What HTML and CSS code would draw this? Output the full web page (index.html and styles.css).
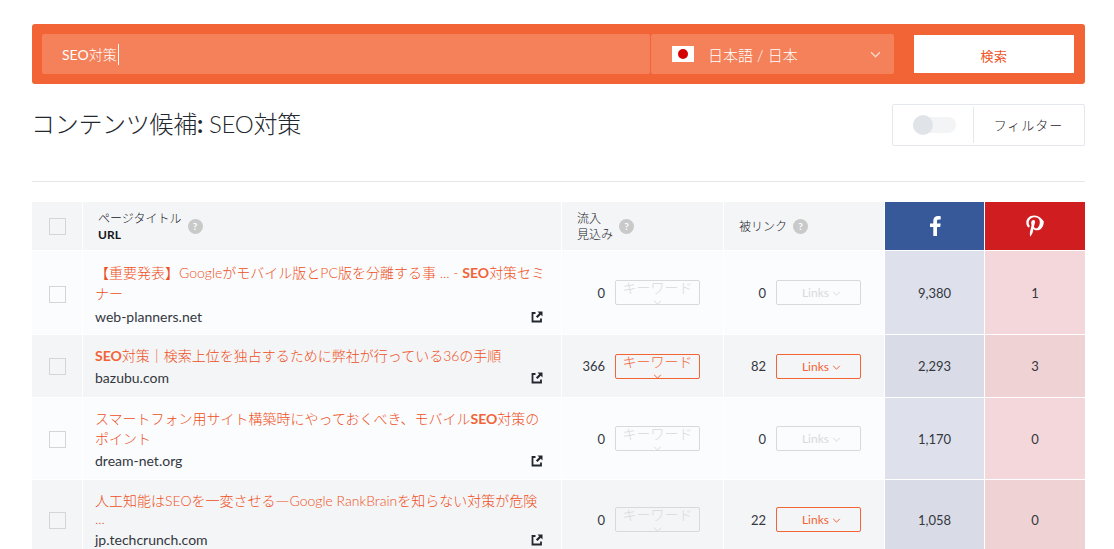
FILE: index.html
```html
<!DOCTYPE html>
<html lang="ja">
<head>
<meta charset="utf-8">
<title>コンテンツ候補</title>
<link rel="stylesheet" href="styles.css">
</head>
<body>
<svg class="defs" width="0" height="0" aria-hidden="true">
  <symbol id="ext" viewBox="0 0 12 12"><path d="M4.500 2H1.500v8.500H10V7.500" fill="none" stroke="currentColor" stroke-width="1.800"/><path d="M6.500 .5H11.500V5.500L9.800 3.800 6.500 7.100 4.900 5.500 8.200 2.200z" fill="currentColor"/></symbol>
  <symbol id="chev" viewBox="0 0 10 6"><path d="M1 1l4 4 4-4" fill="none" stroke="currentColor" stroke-width="1.2"/></symbol>
</svg>
<main class="page">
  <form class="search">
    <div class="field query"><span class="query-text">SEO<span class="thin">対策</span></span><span class="caret"></span></div>
    <div class="field lang">
      <span class="flag"><span class="sun"></span></span>
      <span class="lang-text">日本語 / 日本</span>
      <svg class="lang-chev"><use href="#chev"/></svg>
    </div>
    <button class="go" type="button">検索</button>
  </form>

  <div class="heading">
    <h1>コンテンツ候補<b>:</b> SEO対策</h1>
    <div class="filter">
      <div class="toggle-cell"><span class="toggle"><span class="knob"></span></span></div>
      <div class="filter-label">フィルター</div>
    </div>
  </div>
  <hr class="rule">

  <table>
    <colgroup><col class="c-check"><col class="c-title"><col class="c-num"><col class="c-num2"><col class="c-fb"><col class="c-pin"></colgroup>
    <thead>
      <tr>
        <th class="cell-check"><span class="box"></span></th>
        <th class="h-title"><div class="h-wrap"><div class="h-text"><div>ページタイトル</div><div class="h-url">URL</div></div><span class="help">?</span></div></th>
        <th class="h-num"><div class="h-wrap"><div class="h-text">流入<br>見込み</div><span class="help">?</span></div></th>
        <th class="h-num"><div class="h-wrap"><div class="h-text">被リンク</div><span class="help">?</span></div></th>
        <th class="h-fb"><svg class="social" viewBox="0 0 24 24"><path d="M14 22v-9h3.200l.5-3.600H14V7.200c0-1 .3-1.800 1.800-1.800h1.900V2.200C17.300 2.100 16.200 2 15 2c-2.800 0-4.700 1.700-4.700 4.800v2.600H7V13h3.300v9z" fill="#fff"/></svg></th>
        <th class="h-pin"><svg class="social" viewBox="0 0 24 24"><path d="M12.300 1.500C7 1.500 4.300 5.100 4.300 8.700c0 2.100.8 4 2.500 4.700.3.100.5 0 .6-.3l.3-1c.1-.3 0-.4-.2-.7-.5-.6-.8-1.300-.8-2.400 0-3.100 2.300-5.800 6-5.800 3.300 0 5.100 2 5.100 4.700 0 3.500-1.600 6.500-3.900 6.500-1.300 0-2.200-1.100-1.900-2.300.4-1.500 1.100-3.200 1.100-4.300 0-1-.5-1.800-1.600-1.800-1.300 0-2.300 1.300-2.300 3.100 0 1.100.4 1.900.4 1.900l-1.500 6.600c-.5 2-.1 4.400 0 4.700 0 .1.200.2.300.1.100-.2 1.800-2.200 2.300-4.200.2-.6.900-3.500.9-3.500.5.900 1.800 1.600 3.200 1.600 4.200 0 7-3.800 7-8.900C20.100 4.900 16.800 1.500 12.300 1.500z" fill="#fff"/></svg></th>
      </tr>
    </thead>
    <tbody>
      <tr class="odd r1">
        <td class="cell-check"><span class="box"></span></td>
        <td class="title"><a class="t-link">【重要発表】Googleがモバイル版とPC版を分離する事 ... - <b>SEO</b>対策セミナー</a><div class="url"><span>web-planners.net</span><svg class="ext"><use href="#ext"/></svg></div></td>
        <td class="num"><div class="n-wrap"><span>0</span><button type="button" class="pill kw off">キーワード <svg class="chev"><use href="#chev"/></svg></button></div></td>
        <td class="num"><div class="n-wrap"><span>0</span><button type="button" class="pill off">Links <svg class="chev"><use href="#chev"/></svg></button></div></td>
        <td class="fb">9,380</td><td class="pin">1</td>
      </tr>
      <tr class="even r2">
        <td class="cell-check"><span class="box"></span></td>
        <td class="title"><a class="t-link"><b>SEO</b>対策｜検索上位を独占するために弊社が行っている36の手順</a><div class="url"><span>bazubu.com</span><svg class="ext"><use href="#ext"/></svg></div></td>
        <td class="num"><div class="n-wrap"><span>366</span><button type="button" class="pill kw">キーワード <svg class="chev"><use href="#chev"/></svg></button></div></td>
        <td class="num"><div class="n-wrap"><span>82</span><button type="button" class="pill">Links <svg class="chev"><use href="#chev"/></svg></button></div></td>
        <td class="fb">2,293</td><td class="pin">3</td>
      </tr>
      <tr class="odd r3">
        <td class="cell-check"><span class="box"></span></td>
        <td class="title"><a class="t-link">スマートフォン用サイト構築時にやっておくべき、モバイル<b>SEO</b>対策のポイント</a><div class="url"><span>dream-net.org</span><svg class="ext"><use href="#ext"/></svg></div></td>
        <td class="num"><div class="n-wrap"><span>0</span><button type="button" class="pill kw off">キーワード <svg class="chev"><use href="#chev"/></svg></button></div></td>
        <td class="num"><div class="n-wrap"><span>0</span><button type="button" class="pill off">Links <svg class="chev"><use href="#chev"/></svg></button></div></td>
        <td class="fb">1,170</td><td class="pin">0</td>
      </tr>
      <tr class="even r4">
        <td class="cell-check"><span class="box"></span></td>
        <td class="title"><a class="t-link">人工知能はSEOを一変させる<span class="cjk">―</span>Google RankBrainを知らない対策が危険 ...</a><div class="url"><span>jp.techcrunch.com</span><svg class="ext"><use href="#ext"/></svg></div></td>
        <td class="num"><div class="n-wrap"><span>0</span><button type="button" class="pill kw off">キーワード <svg class="chev"><use href="#chev"/></svg></button></div></td>
        <td class="num"><div class="n-wrap"><span>22</span><button type="button" class="pill">Links <svg class="chev"><use href="#chev"/></svg></button></div></td>
        <td class="fb">1,058</td><td class="pin">0</td>
      </tr>
    </tbody>
  </table>
</main>
</body>
</html>
```
FILE: styles.css
```css
* { box-sizing: border-box; }
html, body { margin: 0; height: 549px; overflow: hidden; background: #fff; }
body { font-family: Lato, "Noto Sans CJK JP", sans-serif; color: #2b2f36; font-size: 14px; font-weight: 400; }
.defs { position: absolute; }
.page { padding: 24px 29px 0 32px; }

.search { display: flex; align-items: center; height: 60px; background: #f26336; border-radius: 3px; padding: 0 11px 0 10px; }
.field { height: 40px; background: #f4815a; color: #fff; display: flex; align-items: center; border-radius: 2px; }
.query { width: 608px; padding-left: 20px; font-size: 14px; }
.thin { font-weight: 300; }
.caret { width: 1px; height: 21px; background: #fff; margin-left: 1px; }
.lang { width: 243px; margin-left: 1px; padding-left: 21px; font-size: 15px; }
.flag { width: 22px; height: 16px; background: #fff; display: flex; align-items: center; justify-content: center; }
.sun { width: 10px; height: 10px; border-radius: 50%; background: #d40000; }
.lang-text { margin-left: 14px; flex: 1; font-weight: 300; }
.lang-chev { width: 11px; height: 7px; margin-right: 13px; color: #fbd9cc; }
.go { width: 160px; height: 38px; margin-left: 20px; border: 0; background: #fff; color: #ee5527; font: inherit; font-size: 13px; font-weight: 400; padding: 3px 0 0 0; letter-spacing: .5px; }

.heading { display: flex; justify-content: space-between; align-items: flex-start; margin-top: 20px; }
h1 { margin: 1px 0 0 -1px; font-size: 24px; font-weight: 300; line-height: 38px; color: #23272e; letter-spacing: -.3px; }
h1 b { font-weight: 700; }
.filter { display: flex; width: 193px; height: 42px; border: 1px solid #e4e7ec; border-radius: 2px; }
.toggle-cell { width: 81px; display: flex; align-items: center; padding-left: 20px; position: relative; }
.toggle-cell::after { content: ""; position: absolute; right: 0; top: 2px; bottom: 2px; width: 1px; background: #e4e7ec; }
.toggle { width: 43px; height: 16px; background: #f3f4f6; border-radius: 8px; display: flex; align-items: center; }
.knob { width: 20px; height: 20px; border-radius: 50%; background: #e0e4e9; }
.filter-label { flex: 1; text-align: center; font-size: 13px; font-weight: 300; color: #1f232a; line-height: 40px; letter-spacing: 1px; padding-right: 1px; }
.rule { border: 0; height: 1px; background: #e5e6e8; margin: 35px 0 20px; }

table { width: 1053px; table-layout: fixed; border-collapse: separate; border-spacing: 0; }
.c-check { width: 51px; } .c-title { width: 479px; } .c-num { width: 162px; } .c-num2 { width: 161px; } .c-fb { width: 100px; } .c-pin { width: 100px; }
th, td { padding: 0; border-right: 1px solid #fff; border-bottom: 1px solid #fff; vertical-align: middle; }
th:last-child, td:last-child { border-right: 0; }
thead tr { height: 49px; }
th { background: #f4f5f7; font-weight: 300; text-align: left; font-size: 12px; line-height: 16px; color: #14171c; }
.h-title, .h-num { padding-left: 15px; }
.h-wrap { display: flex; align-items: center; gap: 6px; }
.h-text { padding-top: 2px; }
.h-url { font-weight: 700; font-size: 12px; line-height: 16px; }
.help { width: 15px; height: 15px; border-radius: 50%; background: #c9c9c9; color: #fff; font-size: 10px; font-weight: 700; line-height: 15px; text-align: center; }
.h-fb { background: #375899; text-align: center; }
.h-pin { background: #cf1d20; text-align: center; }
.social { width: 24px; height: 24px; display: block; margin: 0 auto; }
.h-pin .social { transform: translateX(-1px); }

.r1 { height: 84px; } .r2 { height: 63px; } .r3 { height: 82px; } .r4 { height: 80px; }
.odd td { background: #fbfcfe; }
.even td { background: #f4f5f7; }
.odd .fb { background: #dee1ec; } .even .fb { background: #d9dce6; }
.odd .pin { background: #f4d7da; } .even .pin { background: #efd2d4; }
.fb, .pin { text-align: center; font-size: 13px; color: #33373e; }
.cell-check { text-align: center; }
.box { display: block; width: 17px; height: 17px; margin: 1px auto 0 17px; border: 1px solid #d5d5d5; background: transparent; }
.r1 .box { margin-top: 3px; }
.title { padding: 10px 15px 0 12px; vertical-align: top; }
.r1 .title { padding-top: 11px; }
.t-link { display: block; color: #ee5022; font-size: 14px; line-height: normal; font-weight: 300; }
.r1 .t-link { line-height: 21px; }
.t-link b { font-weight: 700; color: #f26336; }
.cjk { font-family: "Noto Sans CJK JP", sans-serif; }
.url { display: flex; justify-content: space-between; align-items: center; line-height: 21px; font-size: 14px; padding: 2px 3px 0 0; color: #33373e; }
.ext { width: 12px; height: 12px; color: #23272e; }
.n-wrap { display: flex; justify-content: flex-end; align-items: center; gap: 10px; padding-right: 23px; font-size: 13px; color: #33373e; }
.pill { width: 85px; height: 25px; background: transparent; border: 1px solid #f26336; border-radius: 2px; color: #f26336; font: inherit; font-size: 12px; line-height: 23px; padding: 0 0 0 6px; text-align: center; overflow: hidden; }
.pill.kw { display: block; font-size: 14px; font-weight: 300; line-height: 14px; padding: 0 4px; }
.chev { width: 9px; height: 5px; vertical-align: 1px; }
.kw .chev { vertical-align: 2px; }
.off { border-color: #d9d9dc; color: #d9d9dc; }
```
